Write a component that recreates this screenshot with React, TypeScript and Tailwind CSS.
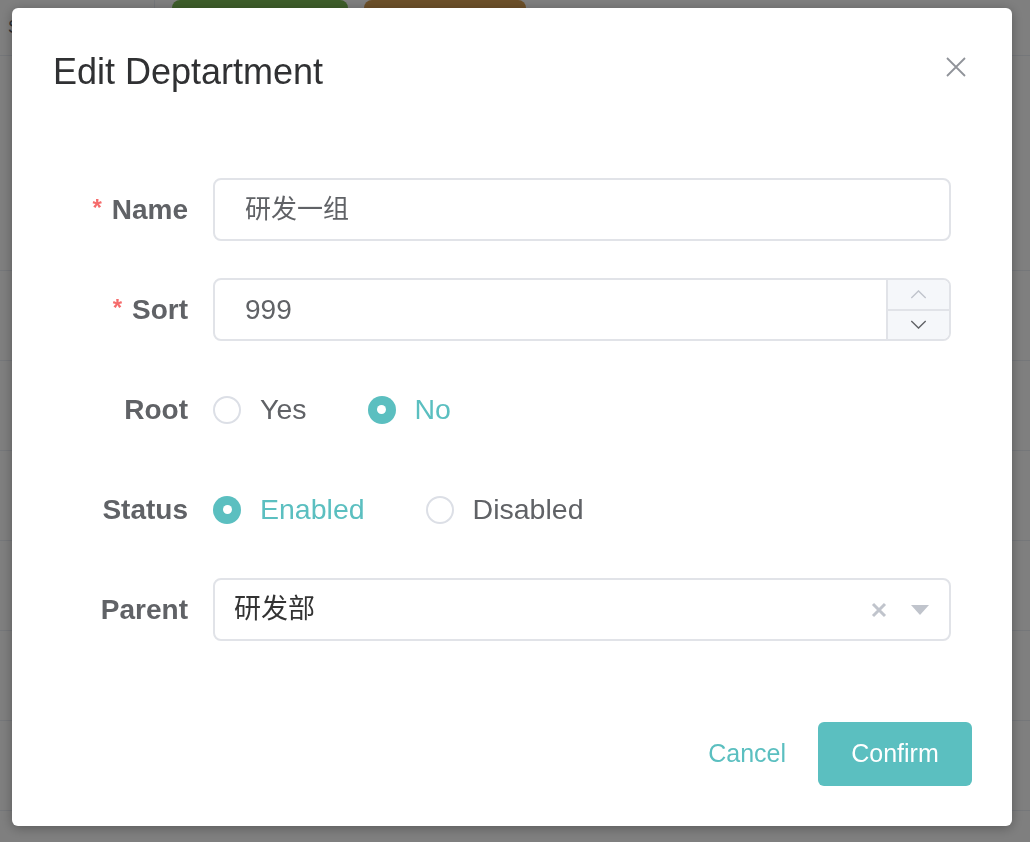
import React, { useState } from 'react';

const FONT = { fontFamily: '"Liberation Sans", "Noto Sans CJK SC", sans-serif' };

const Radio: React.FC<{ label: string; checked: boolean; onClick: () => void }> = ({ label, checked, onClick }) => (
  <label onClick={onClick} className="flex items-center cursor-pointer mr-[61px]">
    {checked ? (
      <span className="w-[28px] h-[28px] rounded-full bg-[#5bbfc0] flex items-center justify-center">
        <span className="w-[9px] h-[9px] rounded-full bg-white" />
      </span>
    ) : (
      <span className="w-[28px] h-[28px] rounded-full border-2 border-[#dcdfe6] bg-white" />
    )}
    <span className={`ml-[19px] text-[28.5px] ${checked ? 'text-[#5bbfc0]' : 'text-[#606266]'}`}>{label}</span>
  </label>
);

const FormRow: React.FC<{ label: string; required?: boolean; last?: boolean; children: React.ReactNode }> = ({
  label,
  required,
  last,
  children,
}) => (
  <div className={`flex items-center h-[63px] ${last ? '' : 'mb-[37px]'}`}>
    <div className="w-[161px] pr-[25px] text-right text-[28px] font-bold text-[#606266] shrink-0">
      {required && <span className="text-[#f56c6c] text-[24px] mr-[10px] relative top-[-3px]">*</span>}
      {label}
    </div>
    <div className="flex-1 h-full flex items-center">{children}</div>
  </div>
);

export default function App() {
  const [root, setRoot] = useState(false);
  const [enabled, setEnabled] = useState(true);

  return (
    <div className="w-[1030px] h-[842px] bg-white overflow-hidden" style={FONT}>
      {/* page behind */}
      <div className="flex h-[56px] border-b border-[#ebeef5]">
        <div className="w-[155px] border-r border-[#ebeef5] pl-[8px] pt-[14px] text-[18px] text-[#606266]">S</div>
        <div className="flex items-start ml-[17px] gap-[16px]">
          <div className="w-[176px] h-[40px] rounded-[8px] bg-[#7cbc55]" />
          <div className="w-[162px] h-[40px] rounded-[8px] bg-[#d9a053]" />
        </div>
      </div>
      <div className="h-[215px] border-b border-[#ebeef5]" />
      {[0, 1, 2, 3, 4, 5, 6].map((i) => (
        <div key={i} className="h-[90px] border-b border-[#ebeef5]" />
      ))}

      {/* overlay */}
      <div className="fixed inset-0 bg-black/50 pl-[12px] pt-[8px]">
        <div className="relative w-[1000px] h-[818px] bg-white rounded-[6px] shadow-[0_2px_12px_rgba(0,0,0,0.3)] flex flex-col">
          <div className="px-[41px] pt-[40px] h-[88px]">
            <h2 className="text-[36px] leading-[48px] text-[#303133]">Edit Deptartment</h2>
          </div>
          <button className="absolute top-[49px] right-[46px] w-[20px] h-[20px] text-[#909399]">
            <svg viewBox="0 0 20 20" width="20" height="20" fill="none" stroke="currentColor" strokeWidth="1.8">
              <path d="M1 1 L19 19 M19 1 L1 19" />
            </svg>
          </button>

          <div className="pl-[40px] pr-[61px] pt-[82px]">
            <FormRow label="Name" required>
              <div className="w-full h-full border-2 border-[#e1e3e8] rounded-[8px] flex items-center px-[30px] text-[26px] text-[#606266]">
                研发一组
              </div>
            </FormRow>
            <FormRow label="Sort" required>
              <div className="w-full h-full border-2 border-[#e1e3e8] rounded-[8px] flex overflow-hidden">
                <div className="flex-1 flex items-center px-[30px] text-[28px] text-[#606266]">999</div>
                <div className="w-[63px] border-l-2 border-[#e1e3e8] bg-[#f5f7fa] flex flex-col">
                  <div className="flex-1 flex items-center justify-center border-b-2 border-[#e1e3e8] text-[#c0c4cc]">
                    <svg viewBox="0 0 18 10" width="17" height="9" fill="none" stroke="currentColor" strokeWidth="1.5">
                      <path d="M1 9 L9 1 L17 9" />
                    </svg>
                  </div>
                  <div className="flex-1 flex items-center justify-center text-[#606266]">
                    <svg viewBox="0 0 18 10" width="17" height="9" fill="none" stroke="currentColor" strokeWidth="1.5">
                      <path d="M1 1 L9 9 L17 1" />
                    </svg>
                  </div>
                </div>
              </div>
            </FormRow>
            <FormRow label="Root">
              <Radio label="Yes" checked={root} onClick={() => setRoot(true)} />
              <Radio label="No" checked={!root} onClick={() => setRoot(false)} />
            </FormRow>
            <FormRow label="Status">
              <Radio label="Enabled" checked={enabled} onClick={() => setEnabled(true)} />
              <Radio label="Disabled" checked={!enabled} onClick={() => setEnabled(false)} />
            </FormRow>
            <FormRow label="Parent" last>
              <div className="w-full h-full border-2 border-[#e1e3e8] rounded-[8px] flex items-center pl-[19px] pr-[20px] text-[27px] text-[#333333]">
                <span className="flex-1">研发部</span>
                <svg viewBox="0 0 16 16" width="16" height="16" fill="none" stroke="#c0c4cc" strokeWidth="3" className="mr-[24px]">
                  <path d="M2 2 L14 14 M14 2 L2 14" />
                </svg>
                <svg viewBox="0 0 18 10" width="18" height="10" fill="#c0c4cc">
                  <path d="M0 0 H18 L9 10 Z" />
                </svg>
              </div>
            </FormRow>
          </div>

          <div className="mt-[81px] pr-[40px] flex justify-end">
            <button className="h-[64px] px-[32px] text-[25px] text-[#5bbfc0]">Cancel</button>
            <button className="h-[64px] w-[154px] rounded-[6px] bg-[#5bbfc0] text-[25px] text-white">Confirm</button>
          </div>
        </div>
      </div>
    </div>
  );
}
